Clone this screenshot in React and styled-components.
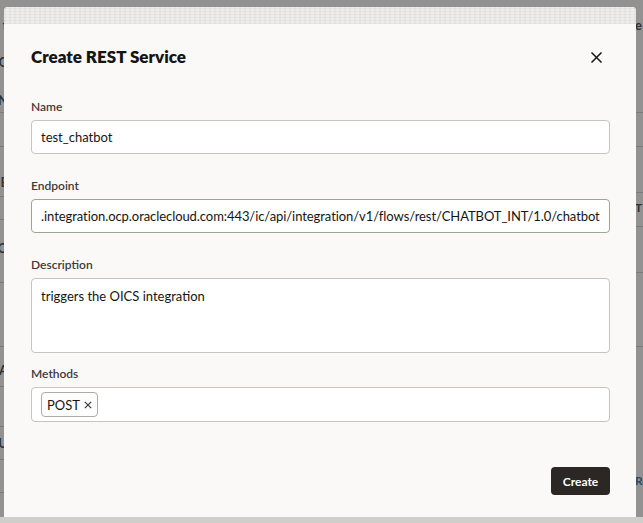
import React from "react";
import styled, { createGlobalStyle } from "styled-components";

const Global = createGlobalStyle`
  html, body { margin: 0; padding: 0; }
  body {
    width: 643px; height: 523px; overflow: hidden;
    background: #ffffff;
    font-family: "Lato", "Noto Sans", sans-serif;
  }
  * { box-sizing: border-box; }
`;

const Page = styled.div`
  position: relative;
  width: 643px;
  height: 523px;
  display: grid;
  grid-template-columns: 8px 1fr 8px;
  background: #f5f5f5;
  overflow: hidden;
`;

const Rail = styled.div`
  display: flex;
  flex-direction: column;
  overflow: hidden;
`;

const RailRow = styled.div`
  height: ${(p) => p.$h}px;
  flex: none;
  display: flex;
  align-items: center;
  justify-content: ${(p) => (p.$right ? "flex-start" : "flex-end")};
  border-bottom: ${(p) => (p.$line ? "1px solid #c4c4c4" : "none")};
  font-size: ${(p) => p.$size || 13}px;
  font-weight: 700;
  color: ${(p) => p.$color || "#2b2b2b"};
  white-space: nowrap;
`;

const Middle = styled.div``;

const Overlay = styled.div`
  position: absolute;
  inset: 0;
  background: rgba(55, 55, 55, 0.52);
`;

const BottomStrip = styled.div`
  position: absolute;
  left: 0; right: 0; bottom: 0;
  height: 6px;
  background: #cfcecb;
`;

const Dialog = styled.div`
  position: absolute;
  left: 4px;
  top: 7px;
  width: 632px;
  height: 510px;
  background: #fbf9f8;
  border-radius: 4px 4px 0 0;
  display: flex;
  flex-direction: column;
  overflow: hidden;
`;

const DragBand = styled.div`
  height: 17px;
  flex: none;
  background:
    repeating-linear-gradient(90deg, rgba(0,0,0,0.03) 0 2px, transparent 2px 5px),
    repeating-linear-gradient(0deg, rgba(0,0,0,0.035) 0 1px, transparent 1px 3px),
    #efedeb;
`;

const Header = styled.div`
  display: flex;
  justify-content: space-between;
  align-items: flex-start;
  padding: 21px 32px 0 27px;
  height: 75px;
  flex: none;
`;

const Title = styled.h1`
  margin: 0;
  font-size: 17px;
  line-height: 24px;
  font-weight: 800;
  color: #161513;
`;

const CloseButton = styled.button`
  border: none;
  background: transparent;
  padding: 0;
  width: 16px;
  height: 16px;
  margin-top: 4px;
  display: flex;
  align-items: center;
  justify-content: center;
  cursor: pointer;
`;

const Body = styled.div`
  display: flex;
  flex-direction: column;
  padding: 0 26px 0 27px;
  flex: 1;
`;

const Field = styled.div`
  display: flex;
  flex-direction: column;
  margin-top: ${(p) => p.$gap}px;
`;

const Label = styled.label`
  font-size: 12px;
  line-height: 16px;
  font-weight: 600;
  color: #3d3a37;
  margin-bottom: 5px;
`;

const Input = styled.input`
  height: 34px;
  width: 100%;
  border: 1px solid ${(p) => p.$border || "#c7c3bf"};
  border-radius: 4px;
  background: #ffffff;
  padding: 0 9px;
  font-family: inherit;
  font-size: 13px;
  letter-spacing: ${(p) => (p.$tight ? "-0.07px" : "0")};
  color: #161513;
  outline: none;
`;

const TextArea = styled.textarea`
  height: 75px;
  width: 100%;
  border: 1px solid #c7c3bf;
  border-radius: 4px;
  background: #ffffff;
  padding: 8px 9px;
  font-family: inherit;
  font-size: 13px;
  line-height: 18px;
  color: #161513;
  resize: none;
  outline: none;
`;

const ChipBox = styled.div`
  height: 35px;
  border: 1px solid #c7c3bf;
  border-radius: 4px;
  background: #ffffff;
  display: flex;
  align-items: center;
  padding: 0 9px;
  gap: 4px;
`;

const Chip = styled.span`
  display: inline-flex;
  align-items: center;
  gap: 4px;
  height: 25px;
  padding: 0 5px;
  border: 1px solid #aeaaa6;
  border-radius: 4px;
  background: #fdfdfd;
  font-size: 13px;
  color: #161513;
`;

const ChipRemove = styled.span`
  display: inline-flex;
  align-items: center;
`;

const Footer = styled.div`
  display: flex;
  justify-content: flex-end;
  padding: 0 26px 22px 0;
`;

const PrimaryButton = styled.button`
  height: 28px;
  width: 59px;
  border: none;
  border-radius: 4px;
  background: #2b2724;
  color: #ffffff;
  font-family: inherit;
  font-size: 12px;
  font-weight: 700;
  cursor: pointer;
`;

const leftRows = [
  { h: 18 },
  { h: 14, t: "t", size: 15 },
  { h: 23 },
  { h: 14, t: "G" },
  { h: 24 },
  { h: 14, t: "N" },
  { h: 6, line: true },
  { h: 34, line: true },
  { h: 28 },
  { h: 14, t: "E", color: "#5a2b24" },
  { h: 8, line: true },
  { h: 23, line: true },
  { h: 21 },
  { h: 14, t: "O" },
  { h: 28, line: true },
  { h: 64, line: true },
  { h: 16 },
  { h: 14, t: "A" },
  { h: 10, line: true },
  { h: 40, line: true },
  { h: 9 },
  { h: 14, t: "U" },
  { h: 10, line: true },
  { h: 33, line: true },
];

const rightRows = [
  { h: 18 },
  { h: 14, t: "e" },
  { h: 81, line: true },
  { h: 34, line: true },
  { h: 46, line: true },
  { h: 28, t: "T", size: 12 },
  { h: 6, line: true },
  { h: 46, line: true },
  { h: 74, line: true },
  { h: 126 },
  { h: 14, t: "Re", size: 12, color: "#2c5a86" },
];

function CloseIcon() {
  return (
    <svg width="11" height="11" viewBox="0 0 11 11" fill="none">
      <path d="M1 1L10 10M10 1L1 10" stroke="#161513" strokeWidth="1.5" strokeLinecap="square" />
    </svg>
  );
}

function SmallX() {
  return (
    <svg width="8" height="8" viewBox="0 0 8 8" fill="none">
      <path d="M0.8 0.8L7.2 7.2M7.2 0.8L0.8 7.2" stroke="#3d3a37" strokeWidth="1.2" />
    </svg>
  );
}

export default function App() {
  return (
    <>
      <Global />
      <Page>
        <Rail>
          {leftRows.map((r, i) => (
            <RailRow key={i} $h={r.h} $line={r.line} $size={r.size} $color={r.color}>
              {r.t}
            </RailRow>
          ))}
        </Rail>
        <Middle />
        <Rail>
          {rightRows.map((r, i) => (
            <RailRow key={i} $right $h={r.h} $line={r.line} $size={r.size} $color={r.color}>
              {r.t}
            </RailRow>
          ))}
        </Rail>
        <Overlay />
        <BottomStrip />
        <Dialog role="dialog" aria-labelledby="dlg-title">
          <DragBand />
          <Header>
            <Title id="dlg-title">Create REST Service</Title>
            <CloseButton aria-label="Close">
              <CloseIcon />
            </CloseButton>
          </Header>
          <Body>
            <Field $gap={0}>
              <Label>Name</Label>
              <Input readOnly defaultValue="test_chatbot" />
            </Field>
            <Field $gap={24}>
              <Label>Endpoint</Label>
              <Input
                readOnly
                $tight
                $border="#9ca78f"
                defaultValue=".integration.ocp.oraclecloud.com:443/ic/api/integration/v1/flows/rest/CHATBOT_INT/1.0/chatbot"
              />
            </Field>
            <Field $gap={24}>
              <Label>Description</Label>
              <TextArea readOnly defaultValue="triggers the OICS integration" />
            </Field>
            <Field $gap={13}>
              <Label>Methods</Label>
              <ChipBox>
                <Chip>
                  POST
                  <ChipRemove>
                    <SmallX />
                  </ChipRemove>
                </Chip>
              </ChipBox>
            </Field>
          </Body>
          <Footer>
            <PrimaryButton>Create</PrimaryButton>
          </Footer>
        </Dialog>
      </Page>
    </>
  );
}
